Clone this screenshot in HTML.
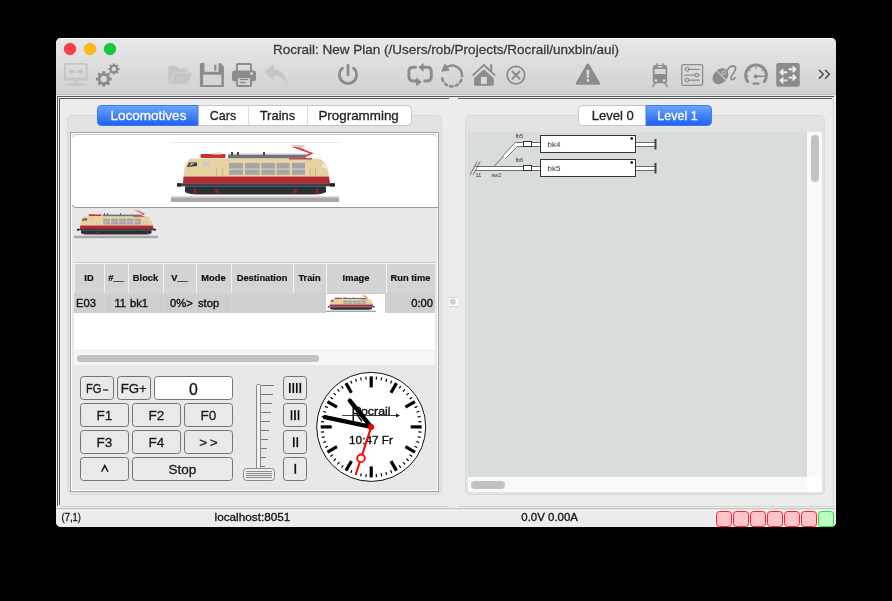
<!DOCTYPE html>
<html><head><meta charset="utf-8">
<style>
html,body{margin:0;padding:0;background:#000;width:892px;height:601px;overflow:hidden}
svg{display:block;font-family:"Liberation Sans",sans-serif;will-change:transform}
</style></head><body>
<svg width="892" height="601" viewBox="0 0 892 601">
<defs>
<linearGradient id="gTitle" x1="0" y1="0" x2="0" y2="1">
<stop offset="0" stop-color="#e8e8e8"/><stop offset="1" stop-color="#d1d1d1"/>
</linearGradient>
<linearGradient id="gBlue" x1="0" y1="0" x2="0" y2="1">
<stop offset="0" stop-color="#6ca6fc"/><stop offset="1" stop-color="#1d5ff6"/>
</linearGradient>

<g id="loco">
<rect x="0" y="0" width="168" height="1" fill="#e4e4e4"/>
<polyline points="119,17.5 141,17.5" stroke="#d23a3a" stroke-width="1.6" fill="none"/>
<polyline points="122,4.5 140.7,11.3 127.7,17" stroke="#e03030" stroke-width="1.5" fill="none"/>
<polyline points="127,4.5 138,10.5" stroke="#e85050" stroke-width="1" fill="none"/>
<rect x="120.5" y="3" width="13" height="2" fill="#d8d0c8"/>
<rect x="29.5" y="12" width="25" height="4" rx="1" fill="#c83232"/>
<rect x="41" y="10.5" width="10" height="2" fill="#e8e0dc"/>
<rect x="57" y="12.5" width="78" height="4" fill="#6f7278"/>
<rect x="57" y="11.5" width="78" height="1" fill="#d0d0d0"/>
<rect x="60" y="10" width="2" height="3" fill="#5a3a3a"/><rect x="92" y="10" width="2" height="3" fill="#5a3a3a"/><rect x="66" y="10" width="2" height="3" fill="#5a3a3a"/>
<path d="M19,16.5 L147,16.5 Q156,18 158,34.5 L12.5,34.5 Q13,21 19,16.5 Z" fill="#e7d3a2"/>
<path d="M12.5,34.5 L158,34.5 L159,41.5 L12,41.5 Z" fill="#b4282e"/>
<polyline points="118,16.8 141,16.8" stroke="#d23a3a" stroke-width="1.4" fill="none"/>
<rect x="6" y="41.3" width="157" height="3" fill="#3a414e"/>
<rect x="6" y="41.3" width="4" height="3.2" fill="#222"/>
<rect x="159" y="41.3" width="5" height="3.2" fill="#222"/>
<path d="M14,44.3 H155 V50 Q150,52.8 140,52.6 H30 Q18,52.6 14,50 Z" fill="#2b2e35"/>
<rect x="22" y="47" width="4" height="5" fill="#8a2a2a" opacity=".7"/><rect x="44" y="47" width="4" height="5" fill="#8a2a2a" opacity=".7"/>
<rect x="122" y="47" width="4" height="5" fill="#8a2a2a" opacity=".7"/><rect x="144" y="47" width="4" height="5" fill="#8a2a2a" opacity=".7"/>
<g fill="#a3a6ac">
<rect x="58" y="21" width="14" height="5.6"/><rect x="74" y="21" width="14.6" height="5.6"/><rect x="90.3" y="21" width="13.7" height="5.6"/><rect x="105.6" y="21" width="13" height="5.6"/><rect x="121" y="21" width="13" height="5.6"/>
<rect x="58" y="27.7" width="14" height="5.1"/><rect x="74" y="27.7" width="14.6" height="5.1"/><rect x="90.3" y="27.7" width="13.7" height="5.1"/><rect x="105.6" y="27.7" width="13" height="5.1"/><rect x="121" y="27.7" width="13" height="5.1"/>
</g>
<rect x="31.3" y="20.3" width="7.3" height="4.6" fill="#c9ccd2"/>
<path d="M16,25 L18,20.5 H26 V24 Z" fill="#3a3a3a"/>
<path d="M18,24 L20,21.5 H24 Z" fill="#e8e8e8"/>
<rect x="151" y="22" width="4" height="4" fill="#e8e8ea"/>
<rect x="45" y="26" width="1" height="8" fill="#cdb885"/><rect x="51" y="26" width="1" height="8" fill="#cdb885"/>
<rect x="139" y="26" width="1" height="8" fill="#cdb885"/><rect x="144" y="26" width="1" height="8" fill="#cdb885"/>
<rect x="0" y="54.3" width="168" height="1.2" fill="#dcc9c2"/>
<rect x="0" y="55.5" width="168" height="4.5" fill="#a8a8a8"/>
</g>

<clipPath id="winClip"><rect x="56" y="38" width="780" height="489" rx="5"/></clipPath>
</defs>
<g clip-path="url(#winClip)">
<!-- window base -->
<rect x="56" y="38" width="780" height="489" fill="#ececec"/>
<!-- title+toolbar -->
<rect x="56" y="38" width="780" height="57" fill="url(#gTitle)"/>
<rect x="56" y="38" width="780" height="1" fill="#f4f4f4"/>
<rect x="56" y="94" width="780" height="1" fill="#c2c2c2"/>
<!-- status bar -->
<rect x="56" y="509" width="780" height="18" fill="#ececec"/>
<rect x="56" y="508" width="780" height="1.6" fill="#c6c6c6"/>
<rect x="56" y="509.6" width="780" height="1" fill="#f8f8f8"/>
</g>
<!-- traffic lights -->
<circle cx="70" cy="49" r="5.8" fill="#fd3d4a" stroke="#e8202f" stroke-width="0.6"/>
<circle cx="90" cy="49" r="5.8" fill="#febb0e" stroke="#e9a800" stroke-width="0.6"/>
<circle cx="110" cy="49" r="5.8" fill="#0dcb3c" stroke="#00b32b" stroke-width="0.6"/>
<text x="273" y="54" font-size="13.5" fill="#3c3c3c" stroke="#3c3c3c" stroke-width="0.3" textLength="346" lengthAdjust="spacingAndGlyphs">Rocrail: New Plan (/Users/rob/Projects/Rocrail/unxbin/aui)</text>


<!-- toolbar icons -->
<g fill="none" stroke="#c6c6c6">
<rect x="64.9" y="63.9" width="21.8" height="15.8" rx="2" stroke-width="1.9"/>
</g>
<rect x="64" y="77.6" width="23.6" height="3.2" rx="1" fill="#c6c6c6"/>
<rect x="75.4" y="80" width="2" height="4" fill="#c6c6c6"/>
<rect x="65" y="83.6" width="22" height="2" rx="1" fill="#c6c6c6"/>
<rect x="70" y="83" width="12" height="3" rx="1.5" fill="#c6c6c6"/>
<path d="M68,71.5 L71.6,68.4 V70.3 H74.8 V72.7 H71.6 V74.6 Z M83.8,71.5 L80.2,68.4 V70.3 H76.9 V72.7 H80.2 V74.6 Z" fill="#c4c4c4"/>
<path fill-rule="evenodd" fill="#8c8c8c" d="M102.33,73.08 L102.41,71.22 L105.19,71.22 L105.27,73.08 L106.95,73.77 L108.32,72.52 L110.28,74.48 L109.03,75.85 L109.72,77.53 L111.58,77.61 L111.58,80.39 L109.72,80.47 L109.03,82.15 L110.28,83.52 L108.32,85.48 L106.95,84.23 L105.27,84.92 L105.19,86.78 L102.41,86.78 L102.33,84.92 L100.65,84.23 L99.28,85.48 L97.32,83.52 L98.57,82.15 L97.88,80.47 L96.02,80.39 L96.02,77.61 L97.88,77.53 L98.57,75.85 L97.32,74.48 L99.28,72.52 L100.65,73.77 Z M107.00,79.00 A3.2,3.2 0 1 0 100.60,79.00 A3.2,3.2 0 1 0 107.00,79.00 Z"/>
<path fill-rule="evenodd" fill="#8c8c8c" d="M112.84,64.73 L112.90,63.39 L114.90,63.39 L114.96,64.73 L116.17,65.23 L117.16,64.32 L118.58,65.74 L117.67,66.73 L118.17,67.94 L119.51,68.00 L119.51,70.00 L118.17,70.06 L117.67,71.27 L118.58,72.26 L117.16,73.68 L116.17,72.77 L114.96,73.27 L114.90,74.61 L112.90,74.61 L112.84,73.27 L111.63,72.77 L110.64,73.68 L109.22,72.26 L110.13,71.27 L109.63,70.06 L108.29,70.00 L108.29,68.00 L109.63,67.94 L110.13,66.73 L109.22,65.74 L110.64,64.32 L111.63,65.23 Z M116.10,69.00 A2.2,2.2 0 1 0 111.70,69.00 A2.2,2.2 0 1 0 116.10,69.00 Z"/>
<!-- folder -->
<path d="M169.3,66 H176.3 Q177.2,66 177.8,67 L178.6,68.6 H186.7 Q187.7,68.6 187.7,69.6 V72.9 H174 L169.4,83.7 Q168.3,83.7 168.3,82.7 V67 Q168.3,66 169.3,66 Z" fill="#c6c6c6"/>
<path d="M173.6,72.4 H192.2 L188,84.2 H168.8 Z" fill="#d6d6d6"/>
<path d="M174.4,73.3 H191 Q191.7,73.3 191.5,74 L187.7,83.2 Q187.5,83.7 187,83.7 H170 Z" fill="#c6c6c6"/>
<!-- floppy -->
<path d="M201,63 H220.5 L223.9,66.4 V85.9 Q223.9,86.9 222.9,86.9 H201 Q199.9,86.9 199.9,85.9 V64 Q199.9,63 201,63 Z" fill="#8c8c8c"/>
<rect x="204.5" y="63" width="14" height="8.8" fill="#d9d9d9"/>
<rect x="214.2" y="64.8" width="2.2" height="5.8" fill="#8c8c8c"/>
<rect x="203.1" y="74.7" width="18.3" height="10.4" fill="#d5d5d5"/>
<!-- printer -->
<rect x="236.9" y="64" width="14.1" height="8" rx="1" fill="none" stroke="#8c8c8c" stroke-width="2"/>
<rect x="232" y="70.4" width="24" height="10.8" rx="2.5" fill="#8c8c8c"/>
<circle cx="251.7" cy="73.6" r="1.3" fill="#e0e0e0"/>
<rect x="236.9" y="77" width="14.1" height="9" rx="1" fill="#d3d3d3" stroke="#8c8c8c" stroke-width="2"/>
<rect x="239.7" y="78.8" width="8.5" height="1.3" fill="#8c8c8c"/>
<rect x="239.7" y="81.9" width="6" height="1.3" fill="#8c8c8c"/>
<!-- undo -->
<path d="M263.9,72.2 L273.6,64.7 V69.6 Q285,69.6 287.2,84.4 Q283,76.5 273.6,75.5 V79.7 Z" fill="#c6c6c6"/>
<!-- power -->
<path d="M342.5,68.2 A8.6,8.6 0 1 0 353.5,68.2" fill="none" stroke="#8c8c8c" stroke-width="2.8" stroke-linecap="round"/>
<line x1="348" y1="65.4" x2="348" y2="74.8" stroke="#8c8c8c" stroke-width="2.8" stroke-linecap="round"/>
<!-- sync -->
<path d="M415.5,67.2 H413 Q408.9,67.2 408.9,71.5 V76.8 Q408.9,81 413,81 H416.8" fill="none" stroke="#8c8c8c" stroke-width="2.9" stroke-linecap="round"/>
<path d="M416.2,77.4 L421.8,82 L416.2,86.6 Z" fill="#8c8c8c"/>
<path d="M424.8,81 H427.2 Q431.3,81 431.3,76.8 V71.5 Q431.3,67.2 427.2,67.2 H423.5" fill="none" stroke="#8c8c8c" stroke-width="2.9" stroke-linecap="round"/>
<path d="M423.6,63 L418.2,67.3 L423.6,71.8 Z" fill="#8c8c8c"/>
<!-- dashed circle -->
<path d="M447,67 A10,10 0 0 1 462,76.3" fill="none" stroke="#8c8c8c" stroke-width="2.6" stroke-linecap="round"/>
<path d="M461.3,80 A10,10 0 0 1 442,76" fill="none" stroke="#8c8c8c" stroke-width="2.6" stroke-linecap="round" stroke-dasharray="2.4 3.3"/>
<path d="M441,71.8 L444.9,63.2 L449.9,70.8 Z" fill="#8c8c8c"/>
<!-- house -->
<path d="M472.6,75.6 L483.9,65 L495.2,75.6" fill="none" stroke="#8c8c8c" stroke-width="1.9" stroke-linejoin="miter"/>
<rect x="490.1" y="64.2" width="2" height="7.3" fill="#8c8c8c"/>
<path d="M474.1,78.3 L483.9,69.2 L493.8,78.3 V84.8 Q493.8,85.8 492.8,85.8 H475.1 Q474.1,85.8 474.1,84.8 Z" fill="#8c8c8c"/>
<rect x="480.9" y="76.9" width="6" height="7.1" fill="#dadada"/>
<!-- circle x -->
<circle cx="515.9" cy="75.1" r="8.8" fill="none" stroke="#8c8c8c" stroke-width="1.8"/>
<path d="M511.9,71 L520.1,79.3 M520.1,71 L511.9,79.3" stroke="#8c8c8c" stroke-width="2"/>
<!-- warning -->
<path d="M586.3,64.8 Q587.9,62.4 589.5,64.8 L599.8,82.4 Q601,84.7 598.4,84.7 H577.5 Q575,84.7 576.1,82.4 Z" fill="#8c8c8c"/>
<path d="M586.3,70.3 Q587.9,69.3 589.5,70.3 L588.7,78 H587.1 Z" fill="#dadada"/>
<circle cx="587.9" cy="80.5" r="1.4" fill="#dadada"/>
<!-- train -->
<path d="M655.5,65 H664.5 Q667.2,65 667.2,68 V81.3 Q667.2,83.3 665.2,83.3 H654.8 Q652.8,83.3 652.8,81.3 V68 Q652.8,65 655.5,65 Z" fill="#8c8c8c"/>
<path d="M656.5,66.5 L657.5,63.2 M663.5,66.5 L662.5,63.2" stroke="#8c8c8c" stroke-width="1.5"/>
<rect x="657.5" y="66" width="5" height="1.4" fill="#d8d8d8"/>
<rect x="654.6" y="69" width="11.1" height="5" fill="#d8d8d8"/>
<circle cx="655.9" cy="80.6" r="1.4" fill="#d8d8d8"/><circle cx="664.1" cy="80.6" r="1.4" fill="#d8d8d8"/>
<path d="M655.3,83 L652.4,86.8 M664.7,83 L667.6,86.8" stroke="#8c8c8c" stroke-width="1.4"/>
<!-- sliders -->
<rect x="681.8" y="64.6" width="20.8" height="20.7" rx="1.5" fill="none" stroke="#8c8c8c" stroke-width="1.3"/>
<path d="M684.4,69.3 H699.8 M684.4,75.1 H699.8 M684.4,80.1 H699.8" stroke="#8c8c8c" stroke-width="1.2"/>
<circle cx="687.2" cy="69.3" r="1.8" fill="#d6d6d6" stroke="#8c8c8c" stroke-width="1.2"/>
<circle cx="696.6" cy="75.1" r="1.8" fill="#d6d6d6" stroke="#8c8c8c" stroke-width="1.2"/>
<circle cx="687.2" cy="80.1" r="1.8" fill="#d6d6d6" stroke="#8c8c8c" stroke-width="1.2"/>
<!-- mouse -->
<g transform="rotate(45 720.6 76.1)">
<ellipse cx="720.6" cy="76.3" rx="6.8" ry="9" fill="#8c8c8c"/>
<rect x="713.5" y="74.6" width="14.5" height="0.9" fill="#d6d6d6"/>
<ellipse cx="720.6" cy="71.4" rx="1.6" ry="2.1" fill="#8c8c8c" stroke="#d6d6d6" stroke-width="0.9"/>
</g>
<path d="M726.5,71.5 Q729,66 733,65.8 Q736.5,66 735.2,70 Q734,73 731.5,76 Q730,79.5 732.5,79.6 Q734.2,79.5 735,77.6" fill="none" stroke="#8c8c8c" stroke-width="1.7" stroke-linecap="round"/>
<!-- gauge -->
<path d="M748.6,82.6 A10.4,10.4 0 1 1 763.4,82.6" fill="none" stroke="#8c8c8c" stroke-width="2.9"/>
<path d="M756,66.5 V68.8 M749,69.6 L750.5,71 M763,69.6 L761.5,71 M746.5,75.8 H748.5 M765.5,75.8 H763.5" stroke="#8c8c8c" stroke-width="1.2"/>
<circle cx="755.7" cy="76.5" r="1.9" fill="#8c8c8c"/>
<path d="M756,76.3 H763.6" stroke="#8c8c8c" stroke-width="1.6"/>
<rect x="752.5" y="82.6" width="7.1" height="2.1" rx="1" fill="#8c8c8c"/>
<!-- switch -->
<rect x="776.2" y="63" width="23.6" height="23.7" rx="2.2" fill="#8c8c8c"/>
<g stroke="#eaeaea" stroke-width="1.9" fill="none" stroke-linecap="round" stroke-linejoin="round">
<path d="M789.4,69.3 H795.4 M793.2,67 L795.6,69.3 L793.2,71.6"/>
<path d="M786.6,72.2 H780.6 M782.8,69.9 L780.4,72.2 L782.8,74.5"/>
<path d="M789.4,77.6 H795.4 M793.2,75.3 L795.6,77.6 L793.2,79.9"/>
<path d="M786.6,80.4 H780.6 M782.8,78.1 L780.4,80.4 L782.8,82.7"/>
</g>
<!-- chevrons -->
<path d="M819,70 L823.3,74.3 L819,78.7 M825.1,70 L829.4,74.3 L825.1,78.7" fill="none" stroke="#444" stroke-width="1.4"/>

<!-- pane borders -->
<rect x="57" y="96" width="777" height="1" fill="#5a5a5a"/>
<rect x="57" y="96" width="1" height="410" fill="#5a5a5a"/>
<rect x="59" y="98" width="390" height="1" fill="#5a5a5a"/>
<rect x="59" y="98" width="1" height="407" fill="#5a5a5a"/>
<rect x="458" y="98" width="374" height="1" fill="#5a5a5a"/>
<rect x="60" y="506" width="389" height="1" fill="#d2d2d2"/>
<rect x="458" y="506" width="375" height="1" fill="#d2d2d2"/>
<rect x="833" y="98" width="1" height="409" fill="#d8d8d8"/>
<rect x="835" y="96" width="1" height="413" fill="#f4f4f4"/>
<!-- left notebook frame -->
<rect x="67.5" y="115.5" width="374" height="379" rx="5" fill="#e3e3e3" stroke="#d8d8d8"/>
<!-- right notebook frame -->
<rect x="465.5" y="115.5" width="359" height="379" rx="5" fill="#e3e3e3" stroke="#d8d8d8"/>

<!-- tabs left -->
<rect x="97.5" y="105.5" width="314" height="20" rx="4" fill="#fff" stroke="#c6c6c6"/>
<path d="M101.5 105.5 H198 V125.5 H101.5 A4 4 0 0 1 97.5 121.5 V109.5 A4 4 0 0 1 101.5 105.5 Z" fill="url(#gBlue)" stroke="#3b79f3"/>
<rect x="248" y="106" width="1" height="19" fill="#dcdcdc"/>
<rect x="307" y="106" width="1" height="19" fill="#dcdcdc"/>
<text x="110.5" y="120" font-size="13.5" fill="#fff" stroke="#fff" stroke-width="0.3" textLength="75.9" lengthAdjust="spacingAndGlyphs">Locomotives</text>
<text x="209.7" y="120" font-size="13.5" fill="#222" stroke="#222" stroke-width="0.3" textLength="26.5" lengthAdjust="spacingAndGlyphs">Cars</text>
<text x="259.7" y="120" font-size="13.5" fill="#222" stroke="#222" stroke-width="0.3" textLength="35.5" lengthAdjust="spacingAndGlyphs">Trains</text>
<text x="318.4" y="120" font-size="13.5" fill="#222" stroke="#222" stroke-width="0.3" textLength="80.4" lengthAdjust="spacingAndGlyphs">Programming</text>


<!-- plan -->
<rect x="468" y="132" width="339" height="345" fill="#d9dcdc"/>
<rect x="807" y="132" width="15" height="345" fill="#f9f9f9"/>
<rect x="468" y="477" width="339" height="15" fill="#f9f9f9"/>
<rect x="807" y="477" width="15" height="15" fill="#fff"/>
<rect x="811" y="135" width="8" height="47" rx="4" fill="#c2c2c2"/>
<rect x="471" y="481" width="34" height="8" rx="4" fill="#c2c2c2"/>
<!-- tracks -->
<g>
<rect x="475" y="166.5" width="65" height="4" fill="#fff"/>
<line x1="475" y1="166.5" x2="540" y2="166.5" stroke="#6e6e6e" stroke-width="1"/>
<line x1="475" y1="170.5" x2="540" y2="170.5" stroke="#6e6e6e" stroke-width="1"/>
<rect x="515" y="142.5" width="25" height="4" fill="#fff"/>
<line x1="515" y1="142.5" x2="540" y2="142.5" stroke="#6e6e6e" stroke-width="1"/>
<line x1="517" y1="146.5" x2="540" y2="146.5" stroke="#6e6e6e" stroke-width="1"/>
<path d="M515.3,142.5 L503,155.8 L505.2,158.6 L517.4,146.5 Z" fill="#fff"/>
<line x1="515.3" y1="142.5" x2="503" y2="155.8" stroke="#6e6e6e" stroke-width="1"/>
<line x1="517.4" y1="146.5" x2="505.2" y2="158.6" stroke="#6e6e6e" stroke-width="1"/>
<line x1="494" y1="166.5" x2="503.5" y2="156" stroke="#6e6e6e" stroke-width="1"/>
<line x1="470" y1="174.8" x2="477.2" y2="161.6" stroke="#555" stroke-width="0.8"/>
<line x1="473" y1="174.8" x2="480.2" y2="161.6" stroke="#555" stroke-width="0.8"/>
<rect x="523.5" y="141.5" width="8" height="5" fill="#fff" stroke="#333"/>
<rect x="523.5" y="165.5" width="8" height="5" fill="#fff" stroke="#333"/>
<rect x="636" y="142.5" width="20" height="4" fill="#fff"/>
<line x1="636" y1="142.5" x2="655" y2="142.5" stroke="#6e6e6e" stroke-width="1"/>
<line x1="636" y1="146.5" x2="655" y2="146.5" stroke="#6e6e6e" stroke-width="1"/>
<line x1="655.5" y1="139" x2="655.5" y2="149.5" stroke="#444" stroke-width="2"/>
<rect x="636" y="166.5" width="20" height="4" fill="#fff"/>
<line x1="636" y1="166.5" x2="655" y2="166.5" stroke="#6e6e6e" stroke-width="1"/>
<line x1="636" y1="170.5" x2="655" y2="170.5" stroke="#6e6e6e" stroke-width="1"/>
<line x1="655.5" y1="163" x2="655.5" y2="173.5" stroke="#444" stroke-width="2"/>
<rect x="540.5" y="135.5" width="95" height="17" fill="#fff" stroke="#333"/>
<rect x="540.5" y="159.5" width="95" height="17" fill="#fff" stroke="#333"/>
<circle cx="631.7" cy="138.5" r="1.3" fill="#000"/>
<circle cx="631.7" cy="162.5" r="1.3" fill="#000"/>
</g>
<g font-size="8" fill="#333">
<text x="547.5" y="147">bk4</text><text x="547.5" y="171">bk5</text>
</g>
<g font-size="5.5" fill="#333">
<text x="515.5" y="138">fb5</text><text x="515.5" y="162">fb6</text>
<text x="475.5" y="177">11</text><text x="491.5" y="177">sw2</text>
</g>
<!-- sash handle -->
<rect x="449" y="297.5" width="9" height="9" fill="#fcfcfc"/>
<rect x="449" y="297" width="9" height="1" fill="#d4d4d4"/>
<rect x="449" y="306" width="9" height="1" fill="#d4d4d4"/>
<circle cx="452.8" cy="301.8" r="3" fill="#cfcfcf"/>

<!-- tabs right -->
<rect x="578.5" y="105.5" width="133" height="20" rx="4" fill="#fff" stroke="#c6c6c6"/>
<path d="M646 105.5 H707.5 A4 4 0 0 1 711.5 109.5 V121.5 A4 4 0 0 1 707.5 125.5 H646 Z" fill="url(#gBlue)" stroke="#3b79f3"/>
<text x="591.7" y="120" font-size="13.5" fill="#222" stroke="#222" stroke-width="0.3" textLength="42.1" lengthAdjust="spacingAndGlyphs">Level 0</text>
<text x="657.3" y="120" font-size="13.5" fill="#fff" stroke="#fff" stroke-width="0.3" textLength="40.3" lengthAdjust="spacingAndGlyphs">Level 1</text>


<!-- left inner panel -->
<rect x="70.5" y="132.5" width="368" height="359" fill="#e8e8e8" stroke="#a2a2a2"/>
<rect x="71" y="490" width="367" height="1" fill="#fff"/>
<rect x="71" y="133" width="1" height="357" fill="#fff"/>
<rect x="437" y="133" width="1" height="357" fill="#fff"/>
<!-- image area -->
<rect x="71" y="133" width="367" height="74" fill="#fff"/>
<path d="M72.5 137 Q72.5 134.5 76 134.5 H433 Q436.5 134.5 436.5 137" fill="none" stroke="#c4c4c4"/>
<path d="M72.5 205 Q72.5 207.5 76 207.5 H438" fill="none" stroke="#9a9a9a"/>
<!-- table -->
<rect x="74" y="262" width="361" height="1" fill="#c9c9c9"/>
<rect x="74" y="263" width="361" height="30" fill="#f4f4f4"/>
<rect x="75" y="264" width="360" height="29" fill="#d4d4d4"/>
<rect x="74" y="293" width="361" height="20" fill="#cfcfcf"/>
<rect x="74" y="313" width="361" height="37" fill="#fff"/>
<rect x="74" y="350" width="361" height="15" fill="#f6f6f6"/>
<rect x="74" y="350" width="361" height="1" fill="#ececec"/>
<rect x="77" y="355" width="242" height="7" rx="3.5" fill="#c2c2c2"/>
<g fill="#f2f2f2">
<rect x="104" y="264" width="1" height="29"/><rect x="128" y="264" width="1" height="29"/>
<rect x="163" y="264" width="1" height="29"/><rect x="196" y="264" width="1" height="29"/>
<rect x="231" y="264" width="1" height="29"/><rect x="293" y="264" width="1" height="29"/>
<rect x="326" y="264" width="1" height="29"/><rect x="386" y="264" width="1" height="29"/>
</g>
<g fill="#d4d4d4">
<rect x="104" y="293" width="1" height="20"/><rect x="128" y="293" width="1" height="20"/>
<rect x="163" y="293" width="1" height="20"/><rect x="196" y="293" width="1" height="20"/>
<rect x="231" y="293" width="1" height="20"/><rect x="293" y="293" width="1" height="20"/>
<rect x="326" y="293" width="1" height="20"/><rect x="386" y="293" width="1" height="20"/>
</g>
<g font-size="9.3" font-weight="bold" fill="#111" stroke="#111" stroke-width="0.2" text-anchor="middle">
<text x="89" y="281">ID</text><text x="116" y="281">#__</text><text x="145.5" y="281">Block</text>
<text x="179.5" y="281">V__</text><text x="213.5" y="281">Mode</text><text x="262" y="281">Destination</text>
<text x="309.5" y="281">Train</text><text x="356" y="281">Image</text><text x="410.5" y="281">Run time</text>
</g>
<g font-size="11.2" fill="#111" stroke="#111" stroke-width="0.35">
<text x="76" y="307">E03</text><text x="126" y="307" text-anchor="end">11</text><text x="130" y="307">bk1</text>
<text x="170" y="307">0%&gt;</text><text x="198" y="307">stop</text><text x="433" y="307" text-anchor="end">0:00</text>
</g>
<rect x="326" y="294" width="59" height="19" fill="#fff"/>


<use href="#loco" transform="translate(171,142)"/>
<use href="#loco" transform="translate(74,208.2) scale(0.5)"/>
<use href="#loco" transform="translate(326,294.2) scale(0.297)"/>


<!-- controls -->
<defs>
<linearGradient id="gBtn" x1="0" y1="0" x2="0" y2="1"><stop offset="0" stop-color="#efefef"/><stop offset="1" stop-color="#e4e4e4"/></linearGradient>
</defs>
<g stroke="#747474" fill="#e9e9e9">
<rect x="80.5" y="376.5" width="33" height="23" rx="3"/>
<rect x="117.5" y="376.5" width="33" height="23" rx="3"/>
<rect x="80.5" y="403.5" width="48" height="23" rx="3"/>
<rect x="132.5" y="403.5" width="48" height="23" rx="3"/>
<rect x="184.5" y="403.5" width="48" height="23" rx="3"/>
<rect x="80.5" y="430.5" width="48" height="23" rx="3"/>
<rect x="132.5" y="430.5" width="48" height="23" rx="3"/>
<rect x="184.5" y="430.5" width="48" height="23" rx="3"/>
<rect x="80.5" y="457.5" width="48" height="23" rx="3"/>
<rect x="132.5" y="457.5" width="100" height="23" rx="3"/>
<rect x="283.5" y="376.5" width="23" height="23" rx="3"/>
<rect x="283.5" y="403.5" width="23" height="23" rx="3"/>
<rect x="283.5" y="430.5" width="23" height="23" rx="3"/>
<rect x="283.5" y="457.5" width="23" height="23" rx="3"/>
</g>
<rect x="154.5" y="376.5" width="78" height="23" rx="3" fill="#fff" stroke="#747474"/>
<g font-size="13.5" fill="#1a1a1a" stroke="#1a1a1a" stroke-width="0.3" text-anchor="middle">
<text x="86" y="393" text-anchor="start" textLength="15.4" lengthAdjust="spacingAndGlyphs">FG</text><text x="133.8" y="393" textLength="26" lengthAdjust="spacingAndGlyphs">FG+</text>
<text x="104.5" y="420">F1</text><text x="156.5" y="420">F2</text><text x="208.5" y="420">F0</text>
<text x="104.5" y="447">F3</text><text x="156.5" y="447">F4</text><text x="208.5" y="447" textLength="18.3" lengthAdjust="spacing">&gt;&gt;</text>
<text x="182.5" y="474">Stop</text>
</g>
<rect x="103" y="389.4" width="5.2" height="1.15" fill="#111"/>
<path d="M101.6,471.8 L104.8,465.6 L108,471.8" fill="none" stroke="#111" stroke-width="1.4"/>
<text x="193.5" y="395" font-size="15.8" fill="#111" stroke="#111" stroke-width="0.3" text-anchor="middle">0</text>
<!-- speed buttons bars -->
<g fill="#111">
<rect x="288.95" y="383" width="1.7" height="10" />
<rect x="292.45" y="383" width="1.7" height="10" />
<rect x="295.95" y="383" width="1.7" height="10" />
<rect x="299.45" y="383" width="1.7" height="10" />
<rect x="290.65" y="410.2" width="1.7" height="10" />
<rect x="294.15" y="410.2" width="1.7" height="10" />
<rect x="297.65" y="410.2" width="1.7" height="10" />
<rect x="292.95" y="437.2" width="1.7" height="10" />
<rect x="296.45" y="437.2" width="1.7" height="10" />
<rect x="294.45" y="463.8" width="1.7" height="10" />
</g>
<!-- slider -->
<rect x="256.5" y="384.5" width="4" height="84" rx="1" fill="#f4f4f4" stroke="#8a8a8a"/>
<g stroke="#777" stroke-width="1">
<line x1="261" y1="385.5" x2="274" y2="385.5"/><line x1="261" y1="394.5" x2="273" y2="394.5"/>
<line x1="261" y1="403.5" x2="272" y2="403.5"/><line x1="261" y1="412.5" x2="271" y2="412.5"/>
<line x1="261" y1="421.5" x2="270" y2="421.5"/><line x1="261" y1="430.5" x2="269" y2="430.5"/>
<line x1="261" y1="439.5" x2="268" y2="439.5"/><line x1="261" y1="448.5" x2="267" y2="448.5"/>
<line x1="261" y1="457.5" x2="266" y2="457.5"/><line x1="261" y1="466.5" x2="265" y2="466.5"/>
</g>
<rect x="243.5" y="468.5" width="31" height="12" rx="3" fill="#eeeeee" stroke="#8a8a8a"/>
<g stroke="#8a8a8a"><line x1="246" y1="471.5" x2="272" y2="471.5"/><line x1="246" y1="473.5" x2="272" y2="473.5"/><line x1="246" y1="475.5" x2="272" y2="475.5"/><line x1="246" y1="477.5" x2="272" y2="477.5"/></g>
<!-- clock -->
<circle cx="371.2" cy="426.9" r="54.5" fill="#fff" stroke="#111" stroke-width="1"/>
<g stroke="#000">
<line x1="371.20" y1="387.40" x2="371.20" y2="376.40" stroke-width="3.2"/>
<line x1="376.17" y1="379.66" x2="376.48" y2="376.68" stroke-width="1.2"/>
<line x1="381.08" y1="380.44" x2="381.70" y2="377.50" stroke-width="1.2"/>
<line x1="385.88" y1="381.72" x2="386.81" y2="378.87" stroke-width="1.2"/>
<line x1="390.52" y1="383.51" x2="391.74" y2="380.77" stroke-width="1.2"/>
<line x1="390.95" y1="392.69" x2="396.45" y2="383.17" stroke-width="3.2"/>
<line x1="399.12" y1="388.47" x2="400.88" y2="386.04" stroke-width="1.2"/>
<line x1="402.98" y1="391.60" x2="404.99" y2="389.37" stroke-width="1.2"/>
<line x1="406.50" y1="395.12" x2="408.73" y2="393.11" stroke-width="1.2"/>
<line x1="409.63" y1="398.98" x2="412.06" y2="397.22" stroke-width="1.2"/>
<line x1="405.41" y1="407.15" x2="414.93" y2="401.65" stroke-width="3.2"/>
<line x1="414.59" y1="407.58" x2="417.33" y2="406.36" stroke-width="1.2"/>
<line x1="416.38" y1="412.22" x2="419.23" y2="411.29" stroke-width="1.2"/>
<line x1="417.66" y1="417.02" x2="420.60" y2="416.40" stroke-width="1.2"/>
<line x1="418.44" y1="421.93" x2="421.42" y2="421.62" stroke-width="1.2"/>
<line x1="410.70" y1="426.90" x2="421.70" y2="426.90" stroke-width="3.2"/>
<line x1="418.44" y1="431.87" x2="421.42" y2="432.18" stroke-width="1.2"/>
<line x1="417.66" y1="436.78" x2="420.60" y2="437.40" stroke-width="1.2"/>
<line x1="416.38" y1="441.58" x2="419.23" y2="442.51" stroke-width="1.2"/>
<line x1="414.59" y1="446.22" x2="417.33" y2="447.44" stroke-width="1.2"/>
<line x1="405.41" y1="446.65" x2="414.93" y2="452.15" stroke-width="3.2"/>
<line x1="409.63" y1="454.82" x2="412.06" y2="456.58" stroke-width="1.2"/>
<line x1="406.50" y1="458.68" x2="408.73" y2="460.69" stroke-width="1.2"/>
<line x1="402.98" y1="462.20" x2="404.99" y2="464.43" stroke-width="1.2"/>
<line x1="399.12" y1="465.33" x2="400.88" y2="467.76" stroke-width="1.2"/>
<line x1="390.95" y1="461.11" x2="396.45" y2="470.63" stroke-width="3.2"/>
<line x1="390.52" y1="470.29" x2="391.74" y2="473.03" stroke-width="1.2"/>
<line x1="385.88" y1="472.08" x2="386.81" y2="474.93" stroke-width="1.2"/>
<line x1="381.08" y1="473.36" x2="381.70" y2="476.30" stroke-width="1.2"/>
<line x1="376.17" y1="474.14" x2="376.48" y2="477.12" stroke-width="1.2"/>
<line x1="371.20" y1="466.40" x2="371.20" y2="477.40" stroke-width="3.2"/>
<line x1="366.23" y1="474.14" x2="365.92" y2="477.12" stroke-width="1.2"/>
<line x1="361.32" y1="473.36" x2="360.70" y2="476.30" stroke-width="1.2"/>
<line x1="356.52" y1="472.08" x2="355.59" y2="474.93" stroke-width="1.2"/>
<line x1="351.88" y1="470.29" x2="350.66" y2="473.03" stroke-width="1.2"/>
<line x1="351.45" y1="461.11" x2="345.95" y2="470.63" stroke-width="3.2"/>
<line x1="343.28" y1="465.33" x2="341.52" y2="467.76" stroke-width="1.2"/>
<line x1="339.42" y1="462.20" x2="337.41" y2="464.43" stroke-width="1.2"/>
<line x1="335.90" y1="458.68" x2="333.67" y2="460.69" stroke-width="1.2"/>
<line x1="332.77" y1="454.82" x2="330.34" y2="456.58" stroke-width="1.2"/>
<line x1="336.99" y1="446.65" x2="327.47" y2="452.15" stroke-width="3.2"/>
<line x1="327.81" y1="446.22" x2="325.07" y2="447.44" stroke-width="1.2"/>
<line x1="326.02" y1="441.58" x2="323.17" y2="442.51" stroke-width="1.2"/>
<line x1="324.74" y1="436.78" x2="321.80" y2="437.40" stroke-width="1.2"/>
<line x1="323.96" y1="431.87" x2="320.98" y2="432.18" stroke-width="1.2"/>
<line x1="331.70" y1="426.90" x2="320.70" y2="426.90" stroke-width="3.2"/>
<line x1="323.96" y1="421.93" x2="320.98" y2="421.62" stroke-width="1.2"/>
<line x1="324.74" y1="417.02" x2="321.80" y2="416.40" stroke-width="1.2"/>
<line x1="326.02" y1="412.22" x2="323.17" y2="411.29" stroke-width="1.2"/>
<line x1="327.81" y1="407.58" x2="325.07" y2="406.36" stroke-width="1.2"/>
<line x1="336.99" y1="407.15" x2="327.47" y2="401.65" stroke-width="3.2"/>
<line x1="332.77" y1="398.98" x2="330.34" y2="397.22" stroke-width="1.2"/>
<line x1="335.90" y1="395.12" x2="333.67" y2="393.11" stroke-width="1.2"/>
<line x1="339.42" y1="391.60" x2="337.41" y2="389.37" stroke-width="1.2"/>
<line x1="343.28" y1="388.47" x2="341.52" y2="386.04" stroke-width="1.2"/>
<line x1="351.45" y1="392.69" x2="345.95" y2="383.17" stroke-width="3.2"/>
<line x1="351.88" y1="383.51" x2="350.66" y2="380.77" stroke-width="1.2"/>
<line x1="356.52" y1="381.72" x2="355.59" y2="378.87" stroke-width="1.2"/>
<line x1="361.32" y1="380.44" x2="360.70" y2="377.50" stroke-width="1.2"/>
<line x1="366.23" y1="379.66" x2="365.92" y2="376.68" stroke-width="1.2"/>
</g>

<text x="361" y="414.6" font-size="11.8" fill="#111" stroke="#111" stroke-width="0.35" textLength="29.5" lengthAdjust="spacingAndGlyphs">ocrail</text>
<path d="M353.2,421.5 V407.2 H357 Q360.6,407.2 360.6,410.3 Q360.6,413.5 357,413.5 H353.2 M356.4,413.5 L362,421.5" fill="none" stroke="#111" stroke-width="1.45"/>
<line x1="342" y1="415.5" x2="398" y2="415.5" stroke="#111" stroke-width="0.8"/>
<path d="M396,413.5 L400,415.5 L396,417.5 Z" fill="#111"/>
<text x="349" y="444.3" font-size="11.5" fill="#111" stroke="#111" stroke-width="0.35" textLength="44" lengthAdjust="spacingAndGlyphs">10:47 Fr</text>
<line x1="371.20" y1="426.90" x2="349.8" y2="400.6" stroke="#000" stroke-width="4.3" stroke-linecap="round"/><line x1="371.20" y1="426.90" x2="324.8" y2="417.2" stroke="#000" stroke-width="4.3" stroke-linecap="round"/><line x1="371.20" y1="426.90" x2="355.75" y2="474.45" stroke="#f00" stroke-width="2" stroke-linecap="butt"/><circle cx="361.00" cy="458.28" r="3.8" fill="#fff" stroke="#f00" stroke-width="1.8"/><circle cx="371.2" cy="426.9" r="3" fill="#f00"/>

<!-- status bar -->
<g font-size="11.2" fill="#111" stroke="#111" stroke-width="0.3">
<text x="61.6" y="521" textLength="19.3" lengthAdjust="spacingAndGlyphs">(7,1)</text>
<text x="214.6" y="521" textLength="75.7" lengthAdjust="spacingAndGlyphs">localhost:8051</text>
<text x="521.3" y="521" textLength="56.7" lengthAdjust="spacingAndGlyphs">0.0V 0.00A</text>
</g>
<g fill="#ffc4c8" stroke="#ff2030" stroke-width="1">
<rect x="716.5" y="511.5" width="15" height="15" rx="3"/>
<rect x="733.5" y="511.5" width="15" height="15" rx="3"/>
<rect x="750.5" y="511.5" width="15" height="15" rx="3"/>
<rect x="767.5" y="511.5" width="15" height="15" rx="3"/>
<rect x="784.5" y="511.5" width="15" height="15" rx="3"/>
<rect x="801.5" y="511.5" width="15" height="15" rx="3"/>
</g>
<rect x="818.5" y="511.5" width="15" height="15" rx="3" fill="#b8ffc0" stroke="#20e040"/>

</svg>
</body></html>
